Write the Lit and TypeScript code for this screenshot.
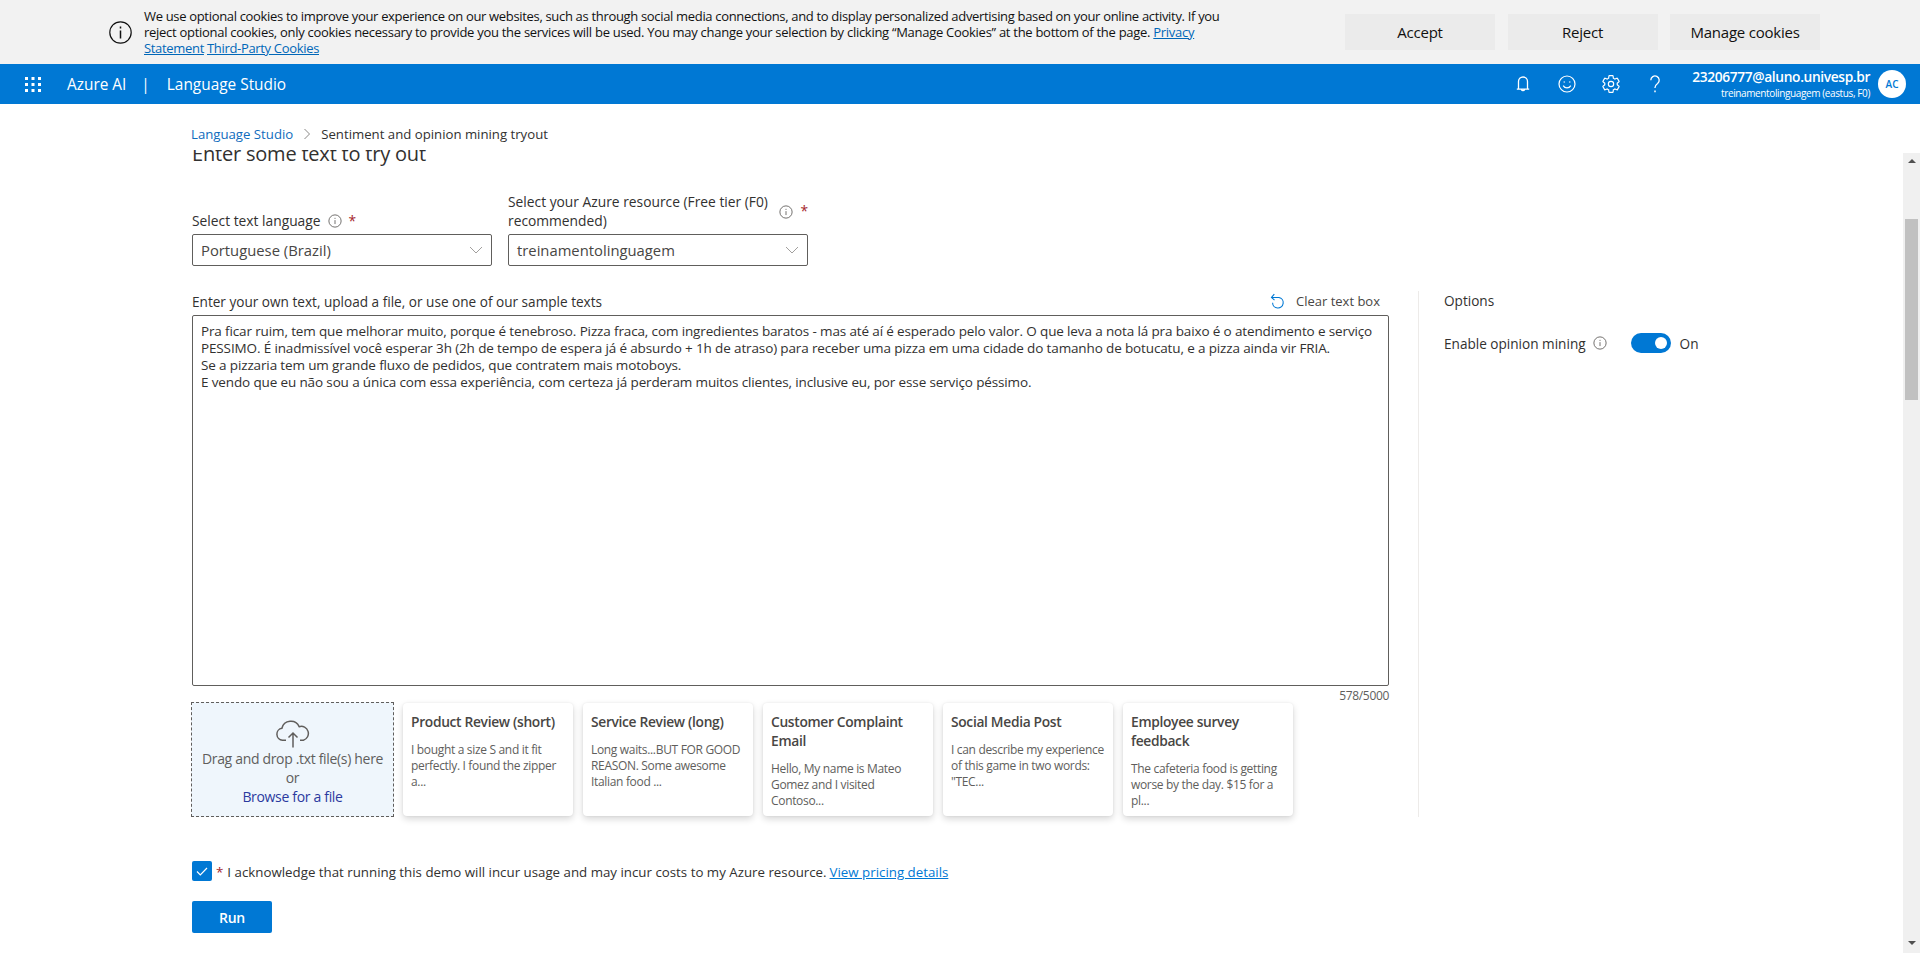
import { LitElement, html, css, svg } from 'lit';
import { customElement } from 'lit/decorators.js';

const SAMPLES = [
  { title: 'Product Review (short)', body: 'I bought a size S and it fit perfectly. I found the zipper a...' },
  { title: 'Service Review (long)', body: 'Long waits...BUT FOR GOOD REASON. Some awesome Italian food ...' },
  { title: 'Customer Complaint Email', body: 'Hello, My name is Mateo Gomez and I visited Contoso...' },
  { title: 'Social Media Post', body: 'I can describe my experience of this game in two words: "TEC...' },
  { title: 'Employee survey feedback', body: 'The cafeteria food is getting worse by the day. $15 for a pl...' },
];

const GEAR = 'M19.43 12.98c.04-.32.07-.64.07-.98 0-.34-.03-.66-.07-.98l2.11-1.65c.19-.15.24-.42.12-.64l-2-3.46c-.09-.16-.26-.25-.44-.25-.06 0-.12.01-.17.03l-2.49 1c-.52-.4-1.08-.73-1.69-.98l-.38-2.65C14.46 2.18 14.25 2 14 2h-4c-.25 0-.46.18-.49.42l-.38 2.65c-.61.25-1.17.59-1.69.98l-2.49-1c-.06-.02-.12-.03-.18-.03-.17 0-.34.09-.43.25l-2 3.46c-.13.22-.07.49.12.64l2.11 1.65c-.04.32-.07.65-.07.98 0 .33.03.66.07.98l-2.11 1.65c-.19.15-.24.42-.12.64l2 3.46c.09.16.26.25.44.25.06 0 .12-.01.17-.03l2.49-1c.52.4 1.08.73 1.69.98l.38 2.65c.03.24.24.42.49.42h4c.25 0 .46-.18.49-.42l.38-2.65c.61-.25 1.17-.59 1.69-.98l2.49 1c.06.02.12.03.18.03.17 0 .34-.09.43-.25l2-3.46c.12-.22.07-.49-.12-.64l-2.11-1.65z';

const infoIcon = (size: number) => html`
  <svg class="info" width=${size} height=${size} viewBox="0 0 16 16" fill="none" stroke="currentColor" stroke-width="1">
    <circle cx="8" cy="8" r="7"></circle>
    <path d="M8 7v4.5M8 4.4v1.2"></path>
  </svg>`;

const chevron = html`
  <svg width="14" height="14" viewBox="0 0 14 14" fill="none" stroke="#a19f9d" stroke-width="1">
    <path d="M1 4l6 6 6-6"></path>
  </svg>`;

const gridDots = [0, 6, 12].flatMap((y) =>
  [0, 6.5, 13].map((x) => svg`<rect x=${x} y=${y} width="3" height="3"></rect>`));

@customElement('app-root')
export class AppRoot extends LitElement {
  static styles = css`
    :host {
      display: flex;
      flex-direction: column;
      height: 953px;
      overflow: hidden;
      background: #fff;
      color: #323130;
      font-family: "Open Sans", "Noto Sans", sans-serif;
      font-size: 13px;
      letter-spacing: -0.025em;
    }
    a { color: inherit; }

    .banner {
      display: flex;
      align-items: center;
      height: 64px;
      flex: none;
      background: #f2f2f2;
      color: #111;
      padding: 0 100px 0 109px;
    }
    .banner-icon { margin-right: 12px; color: #111; flex: none; }
    .banner-text { line-height: 16px; white-space: nowrap; }
    .banner-text a { color: #0067b8; }
    .banner-line2 { letter-spacing: -0.281px; }
    .banner-buttons { display: flex; gap: 12.5px; margin-left: auto; }
    .banner-btn {
      width: 150px;
      height: 36px;
      background: #ebebeb;
      color: #111;
      font-size: 15px;
      letter-spacing: -0.015em;
      display: flex;
      align-items: center;
      justify-content: center;
    }

    .header {
      display: flex;
      align-items: center;
      height: 40px;
      flex: none;
      background: #0078d4;
      color: #fff;
      padding: 0 14px 0 25px;
      font-size: 15.4px;
      letter-spacing: 0;
    }
    .grid { fill: #fff; flex: none; margin-right: 26px; }
    .sep { margin: 0 17px 0 15px; }
    .header-icons { display: flex; gap: 24px; margin-left: auto; margin-right: 27px; align-items: center; }
    .account { text-align: right; margin-right: 8px; letter-spacing: -0.025em; }
    .email { font-size: 13.8px; font-weight: 600; line-height: 18px; }
    .tenant { font-size: 10px; line-height: 14px; }
    .avatar {
      width: 28px;
      height: 28px;
      border-radius: 50%;
      background: #fff;
      color: #0078d4;
      font-size: 10px;
      font-weight: 600;
      display: flex;
      align-items: center;
      justify-content: center;
    }

    .crumbs {
      display: flex;
      align-items: center;
      flex: none;
      height: 46px;
      padding: 14px 0 0 191px;
      box-sizing: border-box;
      background: #fff;
      position: relative;
      z-index: 1;
      font-size: 13.2px;
      letter-spacing: 0;
    }
    .crumbs a { color: #0f6cbd; text-decoration: none; }
    .crumbs svg { margin: 0 9px; }

    .body { flex: 1; display: flex; min-height: 0; }
    .content { flex: 1; min-width: 0; overflow: hidden; padding-left: 192px; }
    h2 {
      margin: -8px 0 0;
      font-size: 20px;
      font-weight: 400;
      line-height: 24px;
      letter-spacing: -0.01em;
      color: #323130;
    }

    .fields { display: flex; gap: 16px; margin-top: 27px; align-items: flex-end; }
    .field { width: 300px; }
    .label {
      display: flex;
      align-items: center;
      font-size: 13.8px;
      letter-spacing: 0;
      line-height: 18.5px;
      margin-bottom: 4px;
    }
    .label .info { margin-left: 7px; flex: none; color: #605e5c; }
    .star { color: #a4262c; margin-left: 7px; }
    .select {
      height: 32px;
      box-sizing: border-box;
      border: 1px solid #605e5c;
      border-radius: 2px;
      display: flex;
      align-items: center;
      justify-content: space-between;
      padding: 0 8px;
      font-size: 14.8px;
      letter-spacing: 0;
      color: #484644;
    }

    .work { display: flex; margin-top: 25px; }
    .left { width: 1197px; flex: none; }
    .left-head {
      display: flex;
      justify-content: space-between;
      height: 20px;
      align-items: center;
      margin-bottom: 4px;
      font-size: 13.6px;
      letter-spacing: 0;
    }
    .clear { display: flex; align-items: center; gap: 10px; font-size: 13px; padding-right: 9px; color: #484644; }
    .textbox {
      height: 371px;
      box-sizing: border-box;
      border: 1px solid #605e5c;
      border-radius: 2px;
      padding: 7px 8px;
      line-height: 17px;
      white-space: pre-wrap;
      font-size: 13.5px;
      letter-spacing: -0.01em;
    }
    .counter { text-align: right; font-size: 12px; line-height: 16px; color: #605e5c; padding-top: 2px; margin-bottom: -2px; }

    .samples { display: flex; align-items: center; margin-left: -1px; }
    .drop {
      width: 203px;
      height: 115px;
      box-sizing: border-box;
      border: 1px dashed #605e5c;
      background: #eff6fc;
      margin-right: 9px;
      flex: none;
      display: flex;
      flex-direction: column;
      align-items: center;
      justify-content: flex-end;
      padding-bottom: 10px;
      font-size: 14px;
      line-height: 19px;
      color: #605e5c;
    }
    .drop a { color: #2b3a9f; text-decoration: none; }
    .drop svg { margin-bottom: 1.5px; }
    .cards { display: flex; gap: 10px; }
    .card {
      width: 170px;
      height: 113px;
      box-sizing: border-box;
      border-radius: 4px;
      padding: 9px 6px 0 8px;
      background: #fff;
      box-shadow: 0 3px 7px rgba(0, 0, 0, 0.16), 0 0 2px rgba(0, 0, 0, 0.08);
    }
    .card-title { font-size: 13.8px; font-weight: 600; line-height: 19px; margin-bottom: 11px; color: #484644; }
    .card-body { font-size: 12px; line-height: 16px; color: #605e5c; }

    .options {
      flex: 1;
      margin-left: 29px;
      padding-left: 25px;
      border-left: 1px solid #edebe9;
      font-size: 13.6px;
      letter-spacing: 0;
    }
    .options-title { height: 20px; line-height: 20px; }
    .opinion { display: flex; align-items: center; margin-top: 22px; height: 20px; }
    .opinion .info { margin-left: 7px; color: #605e5c; }
    .toggle {
      width: 40px;
      height: 20px;
      border-radius: 10px;
      background: #0078d4;
      margin: 0 9px 0 24px;
      display: flex;
      align-items: center;
      justify-content: flex-end;
      padding-right: 4px;
      box-sizing: border-box;
    }
    .knob { width: 12px; height: 12px; border-radius: 50%; background: #fff; }

    .ack { display: flex; align-items: center; margin-top: 44px; height: 20px; font-size: 13.3px; letter-spacing: 0; }
    .ack span, .ack a { padding-top: 2px; }
    .check {
      width: 20px;
      height: 20px;
      border-radius: 2px;
      background: #0078d4;
      display: flex;
      align-items: center;
      justify-content: center;
      margin-right: 4px;
    }
    .ack .req { color: #a4262c; margin-right: 4px; }
    .ack a { color: #0078d4; margin-left: 3px; }
    .run {
      margin-top: 20px;
      width: 80px;
      height: 32px;
      border-radius: 2px;
      background: #0078d4;
      color: #fff;
      font-size: 14px;
      font-weight: 600;
      display: flex;
      align-items: center;
      justify-content: center;
    }

    .scrollbar {
      flex: none;
      display: flex;
      flex-direction: column;
      width: 17px;
      margin-top: 3px;
      background: #f0f0f0;
      box-sizing: border-box;
      padding: 0 2px;
    }
    .arrow {
      width: 0;
      height: 0;
      margin: 6px auto 0;
      border: 4px solid transparent;
      border-top: none;
      border-bottom: 4px solid #505050;
    }
    .arrow.down {
      margin: auto auto 8px;
      border: 4px solid transparent;
      border-bottom: none;
      border-top: 4px solid #505050;
    }
    .thumb { height: 181px; background: #c1c1c1; margin-top: 56px; }
  `;

  render() {
    return html`
      <div class="banner">
        <svg class="banner-icon" width="23" height="23" viewBox="0 0 23 23" fill="none" stroke="currentColor">
          <circle cx="11.5" cy="11.5" r="10.7" stroke-width="1.2"></circle>
          <path d="M11.5 9.5v8M11.5 5.6v1.8" stroke-width="1.5"></path>
        </svg>
        <div class="banner-text">
          We use optional cookies to improve your experience on our websites, such as through social media connections, and to display personalized advertising based on your online activity. If you<br>
          <span class="banner-line2">reject optional cookies, only cookies necessary to provide you the services will be used. You may change your selection by clicking “Manage Cookies” at the bottom of the page. <a href="#">Privacy</a></span><br>
          <a href="#">Statement</a> <a href="#">Third-Party Cookies</a>
        </div>
        <div class="banner-buttons">
          <div class="banner-btn">Accept</div>
          <div class="banner-btn">Reject</div>
          <div class="banner-btn">Manage cookies</div>
        </div>
      </div>

      <div class="header">
        <svg class="grid" width="16" height="15" viewBox="0 0 16 15">${gridDots}</svg>
        <span>Azure AI</span>
        <span class="sep">|</span>
        <span>Language Studio</span>
        <div class="header-icons">
          <svg width="20" height="20" viewBox="0 0 20 20" fill="none" stroke="#fff" stroke-width="1.3">
            <path d="M5.5 15V7.5a4.5 4.5 0 0 1 9 0V15M3.8 15.2h12.4M8.4 15.5a1.7 1.7 0 0 0 3.2 0"></path>
          </svg>
          <svg width="20" height="20" viewBox="0 0 20 20" fill="none" stroke="#fff" stroke-width="1.2">
            <circle cx="10" cy="10" r="8"></circle>
            <path d="M6.2 11.6c1.8 3 5.8 3 7.6 0"></path>
            <path d="M7.3 7.4v1.2M12.7 7.4v1.2" stroke-width="1.5"></path>
          </svg>
          <svg width="20" height="20" viewBox="0 0 24 24" fill="none" stroke="#fff" stroke-width="1.4">
            <path d=${GEAR}></path>
            <circle cx="12" cy="12" r="3.2"></circle>
          </svg>
          <svg width="20" height="20" viewBox="0 0 20 20" fill="none" stroke="#fff" stroke-width="1.3">
            <path d="M5.8 6.2a4.2 4.2 0 1 1 6.8 3.3c-1.6 1.2-2.6 2-2.6 4v.6"></path>
            <path d="M10 16.6v1.6" stroke-width="1.5"></path>
          </svg>
        </div>
        <div class="account">
          <div class="email">23206777@aluno.univesp.br</div>
          <div class="tenant">treinamentolinguagem (eastus, F0)</div>
        </div>
        <div class="avatar">AC</div>
      </div>

      <div class="crumbs">
        <a href="#">Language Studio</a>
        <svg width="10" height="12" viewBox="0 0 10 12" fill="none" stroke="#8a8886"><path d="M2.5 1l5 5-5 5"></path></svg>
        <span>Sentiment and opinion mining tryout</span>
      </div>

      <div class="body">
        <div class="content">
          <h2>Enter some text to try out</h2>
          <div class="fields">
            <div class="field">
              <div class="label">Select text language ${infoIcon(14)}<span class="star">*</span></div>
              <div class="select"><span>Portuguese (Brazil)</span>${chevron}</div>
            </div>
            <div class="field">
              <div class="label"><span>Select your Azure resource (Free tier (F0) recommended)</span>${infoIcon(14)}<span class="star">*</span></div>
              <div class="select"><span>treinamentolinguagem</span>${chevron}</div>
            </div>
          </div>

          <div class="work">
            <div class="left">
              <div class="left-head">
                <span>Enter your own text, upload a file, or use one of our sample texts</span>
                <span class="clear">
                  <svg width="16" height="16" viewBox="0 0 16 16" fill="none" stroke="#0078d4" stroke-width="1.1">
                    <path d="M1.5 4.5H9a5.3 5.3 0 1 1-6.4 5.2M4.3 1.2 1.5 4.5l3 2.6"></path>
                  </svg>
                  Clear text box
                </span>
              </div>
              <div class="textbox">Pra ficar ruim, tem que melhorar muito, porque é tenebroso. Pizza fraca, com ingredientes baratos - mas até aí é esperado pelo valor. O que leva a nota lá pra baixo é o atendimento e serviço
PESSIMO. É inadmissível você esperar 3h (2h de tempo de espera já é absurdo + 1h de atraso) para receber uma pizza em uma cidade do tamanho de botucatu, e a pizza ainda vir FRIA.
Se a pizzaria tem um grande fluxo de pedidos, que contratem mais motoboys.
E vendo que eu não sou a única com essa experiência, com certeza já perderam muitos clientes, inclusive eu, por esse serviço péssimo.</div>
              <div class="counter">578/5000</div>
              <div class="samples">
                <div class="drop">
                  <svg width="36" height="28" viewBox="0 0 36 28" fill="none" stroke="#605e5c" stroke-width="1.5">
                    <path d="M11 20.2H7.5a6 6 0 0 1-.6-11.9 9.2 9.2 0 0 1 17.3-1.6 6.8 6.8 0 0 1 4.2 13.5H25"></path>
                    <path d="M18 27.5V13M13.5 17.5 18 13l4.5 4.5"></path>
                  </svg>
                  <span>Drag and drop .txt file(s) here</span>
                  <span>or</span>
                  <a href="#">Browse for a file</a>
                </div>
                <div class="cards">
                  ${SAMPLES.map((s) => html`
                    <div class="card">
                      <div class="card-title">${s.title}</div>
                      <div class="card-body">${s.body}</div>
                    </div>`)}
                </div>
              </div>
            </div>
            <div class="options">
              <div class="options-title">Options</div>
              <div class="opinion">
                <span>Enable opinion mining</span>
                ${infoIcon(14)}
                <div class="toggle"><div class="knob"></div></div>
                <span>On</span>
              </div>
            </div>
          </div>

          <div class="ack">
            <div class="check">
              <svg width="14" height="14" viewBox="0 0 14 14" fill="none" stroke="#fff" stroke-width="1.2"><path d="M2 7.5l3.3 3.3L12 4"></path></svg>
            </div>
            <span class="req">*</span>
            <span>I acknowledge that running this demo will incur usage and may incur costs to my Azure resource.</span>
            <a href="#">View pricing details</a>
          </div>
          <div class="run">Run</div>
        </div>
        <div class="scrollbar">
          <div class="arrow"></div>
          <div class="thumb"></div>
          <div class="arrow down"></div>
        </div>
      </div>
    `;
  }
}
